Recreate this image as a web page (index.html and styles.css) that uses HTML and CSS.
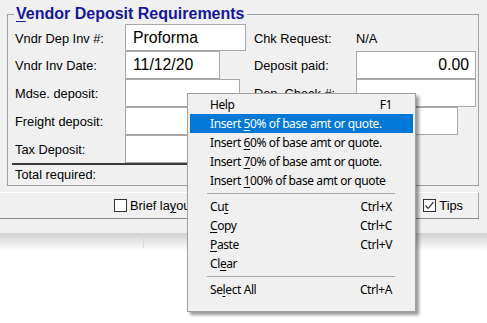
FILE: index.html
```html
<html>

<head>
    <link rel="stylesheet" href="styles.css">
</head>

<body>

    <div class="window">
        <fieldset class="group">
            <legend><u>V</u>endor Deposit Requirements</legend>
            <div class="fields">
                <span class="lbl">Vndr Dep Inv #:</span>
                <div class="box w120">Proforma</div>
                <span class="lbl">Chk Request:</span>
                <span class="lbl">N/A</span>

                <span class="lbl">Vndr Inv Date:</span>
                <div class="box w94">11/12/20</div>
                <span class="lbl">Deposit paid:</span>
                <div class="box w119 num">0.00</div>

                <span class="lbl">Mdse. deposit:</span>
                <div class="box w114"></div>
                <span class="lbl">Dep. Check #:</span>
                <div class="box w119"></div>

                <span class="lbl">Freight deposit:</span>
                <div class="box w120"></div>
                <span class="lbl">Check date:</span>
                <div class="box w101"></div>

                <span class="lbl">Tax Deposit:</span>
                <div class="box w120"></div>
                <span class="lbl"></span>
                <span></span>
            </div>
            <div class="total-line"></div>
            <div class="total">Total required:</div>
        </fieldset>

        <div class="options">
            <label class="chk"><span class="chk-box"></span><span>Brief la<u>y</u>out</span></label>
            <span class="spacer"></span>
            <label class="chk"><span class="chk-box"></span><span>Full detail</span></label>
            <label class="chk"><span class="chk-box">
                    <svg width="11" height="11" viewBox="0 0 11 11">
                        <path d="M1.5 5.5 L4.2 8.3 L9.5 2" fill="none" stroke="#333" stroke-width="1.2" />
                    </svg>
                </span><span>Tips</span></label>
        </div>
    </div>

    <div class="below">
        <div class="col-sep"></div>
    </div>

    <div class="menu">
        <div class="item"><span>Help</span><span>F1</span></div>
        <div class="item active"><span>Insert <u>5</u>0% of base amt or quote.</span></div>
        <div class="item"><span>Insert <u>6</u>0% of base amt or quote.</span></div>
        <div class="item"><span>Insert <u>7</u>0% of base amt or quote.</span></div>
        <div class="item"><span>Insert <u>1</u>00% of base amt or quote</span></div>
        <div class="sep"></div>
        <div class="item"><span>Cu<u>t</u></span><span>Ctrl+X</span></div>
        <div class="item"><span><u>C</u>opy</span><span>Ctrl+C</span></div>
        <div class="item"><span><u>P</u>aste</span><span>Ctrl+V</span></div>
        <div class="item"><span>Cl<u>e</u>ar</span></div>
        <div class="sep"></div>
        <div class="item"><span>Se<u>l</u>ect All</span><span>Ctrl+A</span></div>
    </div>

</body>

</html>
```

FILE: styles.css
```css
body {
    margin: 0;
    width: 487px;
    height: 323px;
    overflow: hidden;
    position: relative;
    background: #fff;
    font-family: "Liberation Sans", Arial, sans-serif;
    font-size: 12.8px;
    color: #000;
}

u {
    text-underline-offset: 2px;
}

.window {
    height: 233px;
    padding-top: 5px;
    box-sizing: border-box;
    background: #f0f0f0;
}

/* group box */
.group {
    margin: 0 8px 0 7px;
    padding: 0;
    min-width: 0;
    border: 1px solid #a0a0a0;
}

.group legend {
    margin-left: 6px;
    padding: 0 2px;
    font-size: 16px;
    font-weight: bold;
    line-height: 18px;
    color: #16169a;
}

.fields {
    display: grid;
    grid-template-columns: 110px 129px 102px 1fr;
    grid-template-rows: 27px 28px 28px 28px 28px;
    padding: 1px 0 0 7px;
}

.lbl {
    align-self: center;
    white-space: nowrap;
    padding-top: 1px;
}

.box {
    display: flex;
    align-items: center;
    box-sizing: border-box;
    height: 100%;
    padding: 0 6px 0 7px;
    background: #fff;
    border: 1px solid #a8a8a8;
    font-size: 15.8px;
}

.box.num {
    justify-content: flex-end;
}

.w94 { width: 95px; }
.w101 { width: 102px; }
.w114 { width: 115px; }
.w119 { width: 120px; }
.w120 { width: 121px; }

.total-line {
    width: 300px;
    margin-left: 4px;
    border-top: 2px solid #3a3a3a;
}

.total {
    padding-left: 7px;
    line-height: 20px;
}

/* options bar */
.options {
    display: flex;
    align-items: center;
    width: 479px;
    height: 27px;
    margin-top: 6px;
    padding: 0 15px 0 114px;
    box-sizing: border-box;
    border-top: 1px solid #fff;
    border-right: 1px solid #a0a0a0;
    border-bottom: 1px solid #8c8c8c;
}

.spacer {
    flex: 1;
}

.chk {
    display: flex;
    align-items: center;
    gap: 3px;
    margin-left: 8px;
    white-space: nowrap;
}

.chk:first-child {
    margin-left: 0;
}

.chk-box {
    display: flex;
    align-items: center;
    justify-content: center;
    width: 13px;
    height: 13px;
    box-sizing: border-box;
    border: 1px solid #333;
    background: #fff;
}

.below {
    height: 90px;
    background: linear-gradient(#d2d2d2, #fff 18px);
}

.col-sep {
    width: 1px;
    height: 15px;
    margin-left: 143px;
    background: #dcdcdc;
}

/* context menu */
.menu {
    position: absolute;
    left: 187px;
    top: 93px;
    width: 229px;
    height: 219px;
    box-sizing: border-box;
    padding: 1px 2px;
    background: #f0f0f0;
    border: 1px solid #a0a0a0;
    box-shadow: 3px 3px 3px rgba(0, 0, 0, 0.4);
    font-family: "Noto Sans", "Open Sans", sans-serif;
    font-size: 12px;
    letter-spacing: -0.4px;
}

.item {
    display: flex;
    justify-content: space-between;
    align-items: center;
    height: 19px;
    padding: 0 21px 0 20px;
    white-space: nowrap;
}

.item.active {
    background: #0078d7;
    color: #fff;
}

.sep {
    height: 1px;
    margin: 3px 18px 3px 17px;
    background: #a8a8a8;
}
```
